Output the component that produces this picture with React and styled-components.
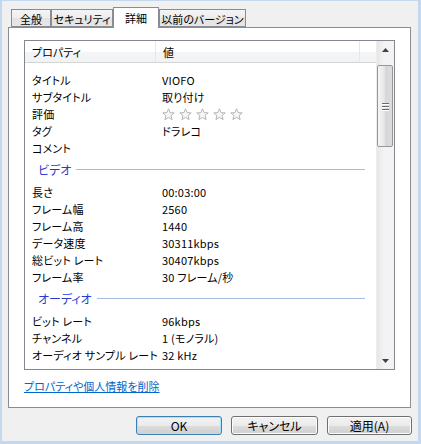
import React from 'react'
import styled, { createGlobalStyle } from 'styled-components'

const GlobalStyle = createGlobalStyle`
  html, body {
    margin: 0;
    padding: 0;
    background: #f0f0f0;
  }
  body {
    font-family: "Noto Sans CJK JP", "Noto Sans", sans-serif;
    font-size: 11px;
    color: #000;
    font-feature-settings: "palt";
  }
`

const basic = [
  ['タイトル', 'VIOFO'],
  ['サブタイトル', '取り付け'],
  ['評価', 'stars'],
  ['タグ', 'ドラレコ'],
  ['コメント', ''],
]

const video = [
  ['長さ', '00:03:00'],
  ['フレーム幅', '2560'],
  ['フレーム高', '1440'],
  ['データ速度', '30311kbps'],
  ['総ビット レート', '30407kbps'],
  ['フレーム率', '30 フレーム/秒'],
]

const audio = [
  ['ビット レート', '96kbps'],
  ['チャンネル', '1 (モノラル)'],
  ['オーディオ サンプル レート', '32 kHz'],
]

const tabs = ['全般', 'セキュリティ', '詳細', '以前のバージョン']
const tabWidths = [40, 62, 46, 87]

const Dialog = styled.div`
  width: 421px;
  height: 444px;
  box-sizing: border-box;
  background: #f0f0f0;
  border-style: solid;
  border-color: #c3d8ee;
  border-width: 1px 3px 3px 2px;
  padding-top: 6px;
`

const TabStrip = styled.div`
  display: flex;
  align-items: flex-end;
  height: 20px;
  padding-left: 9px;
`

const Tab = styled.div`
  box-sizing: border-box;
  width: ${p => p.w}px;
  height: ${p => (p.active ? 21 : 18)}px;
  margin-bottom: ${p => (p.active ? -1 : 0)}px;
  position: relative;
  z-index: ${p => (p.active ? 2 : 1)};
  border: 1px solid #898c95;
  border-bottom: ${p => (p.active ? 'none' : '1px solid #898c95')};
  background: ${p =>
    p.active
      ? '#fff'
      : 'linear-gradient(#f4f4f4, #ededed 50%, #e2e2e2 51%, #e6e6e6)'};
  display: flex;
  align-items: center;
  justify-content: center;
  padding-top: ${p => (p.active ? 0 : 1)}px;
  line-height: 14px;
  white-space: nowrap;
`

const Panel = styled.div`
  box-sizing: border-box;
  margin-left: 6px;
  width: 403px;
  height: 381px;
  background: #fff;
  border: 1px solid #898c95;
  padding: 12px 15px 0 15px;
`

const ListBox = styled.div`
  box-sizing: border-box;
  height: 330px;
  border: 1px solid #828790;
  display: flex;
  overflow: hidden;
`

const ListContent = styled.div`
  flex: 1;
  overflow: hidden;
`

const Header = styled.div`
  display: flex;
  height: 22px;
  box-sizing: border-box;
  border-bottom: 1px solid #d5d5d5;
  background: linear-gradient(#ffffff, #ffffff 50%, #f4f5f7 51%, #f1f2f4);
`

const HeaderCell = styled.div`
  box-sizing: border-box;
  width: ${p => (p.w ? `${p.w}px` : 'auto')};
  flex: ${p => (p.w ? 'none' : 1)};
  border-right: ${p => (p.w ? '1px solid #e3e8ee' : 'none')};
  padding-left: 7px;
  display: flex;
  align-items: center;
  line-height: 14px;
`

const Body = styled.div`
  padding-top: 8px;
`

const Row = styled.div`
  display: grid;
  grid-template-columns: 130px 1fr;
  height: 17px;
  align-items: center;
  padding-left: 7px;
  line-height: 14px;
  white-space: nowrap;
  letter-spacing: 0.2px;
`

const Cell = styled.span`
  overflow: hidden;
`

const GroupHeader = styled.div`
  display: flex;
  align-items: center;
  height: 27px;
  padding-left: 13px;
  padding-right: 11px;
  color: #2c3bcf;
  line-height: 14px;
  font-size: 12px;
  white-space: nowrap;
`

const GroupLine = styled.div`
  flex: 1;
  height: 1px;
  margin-left: 5px;
  background: #a8bbe2;
`

const Stars = styled.div`
  display: flex;
  gap: 4px;
  padding-top: 1px;
`

const ScrollBar = styled.div`
  width: 17px;
  display: flex;
  flex-direction: column;
  background: linear-gradient(to right, #e6e6e6, #f3f3f3 40%, #f3f3f3);
  border-left: 1px solid #ececec;
`

const ArrowBtn = styled.div`
  height: 17px;
  display: flex;
  align-items: center;
  justify-content: center;
`

const Thumb = styled.div`
  box-sizing: border-box;
  margin: 7px 1px 0 0;
  height: 82px;
  border: 1px solid #979797;
  border-radius: 2px;
  background: linear-gradient(to right, #f5f5f5, #e6e6e6 45%, #d6d6d6 55%, #dcdcdc);
  display: flex;
  flex-direction: column;
  align-items: center;
  justify-content: center;
  gap: 2px;
`

const Grip = styled.div`
  width: 7px;
  height: 1px;
  background: #6b6b6b;
  box-shadow: 0 1px 0 #fff;
`

const Spacer = styled.div`
  flex: 1;
`

const Link = styled.a`
  display: inline-block;
  margin-top: 9px;
  color: #0066cc;
  text-decoration: underline;
  line-height: 14px;
  cursor: pointer;
`

const ButtonRow = styled.div`
  display: flex;
  justify-content: flex-end;
  gap: 9px;
  margin-top: 8px;
  padding-right: 6px;
`

const Button = styled.button`
  box-sizing: border-box;
  width: ${p => p.w}px;
  height: 19px;
  padding: 0;
  font: inherit;
  font-size: 12px;
  line-height: 14px;
  color: #000;
  border: 1px solid ${p => (p.primary ? '#3c7fb1' : '#707070')};
  border-radius: 3px;
  background: linear-gradient(#f2f2f2, #ebebeb 50%, #dddddd 51%, #cfcfcf);
  box-shadow: ${p => (p.primary ? 'inset 0 0 0 1px #a6e2fb' : 'inset 0 0 0 1px #fcfcfc')};
`

const Star = () => (
  <svg width="13" height="13" viewBox="0 0 13 13">
    <path
      d="M6.5 0.8 L8.1 4.6 L12.2 4.9 L9.1 7.5 L10.1 11.6 L6.5 9.4 L2.9 11.6 L3.9 7.5 L0.8 4.9 L4.9 4.6 Z"
      fill="#f7f7f7"
      stroke="#b4b4b4"
      strokeWidth="1"
      strokeLinejoin="round"
    />
  </svg>
)

const UpArrow = () => (
  <svg width="7" height="4" viewBox="0 0 7 4">
    <path d="M3.5 0 L7 4 L0 4 Z" fill="#404040" />
  </svg>
)

const DownArrow = () => (
  <svg width="7" height="4" viewBox="0 0 7 4">
    <path d="M0 0 L7 0 L3.5 4 Z" fill="#404040" />
  </svg>
)

const renderRows = rows =>
  rows.map(([label, value]) => (
    <Row key={label}>
      <Cell>{label}</Cell>
      {value === 'stars' ? (
        <Stars>
          {[0, 1, 2, 3, 4].map(i => <Star key={i} />)}
        </Stars>
      ) : (
        <Cell>{value}</Cell>
      )}
    </Row>
  ))

const App = () => {
  return (
    <>
      <GlobalStyle />
      <Dialog>
        <TabStrip>
          {tabs.map((t, i) => (
            <Tab key={t} w={tabWidths[i]} active={i === 2}>
              {t}
            </Tab>
          ))}
        </TabStrip>
        <Panel>
          <ListBox>
            <ListContent>
              <Header>
                <HeaderCell w={131}>プロパティ</HeaderCell>
                <HeaderCell w={204}>値</HeaderCell>
                <HeaderCell />
              </Header>
              <Body>
                {renderRows(basic)}
                <GroupHeader>
                  ビデオ
                  <GroupLine />
                </GroupHeader>
                {renderRows(video)}
                <GroupHeader>
                  オーディオ
                  <GroupLine />
                </GroupHeader>
                {renderRows(audio)}
              </Body>
            </ListContent>
            <ScrollBar>
              <ArrowBtn>
                <UpArrow />
              </ArrowBtn>
              <Thumb>
                <Grip />
                <Grip />
                <Grip />
              </Thumb>
              <Spacer />
              <ArrowBtn>
                <DownArrow />
              </ArrowBtn>
            </ScrollBar>
          </ListBox>
          <Link>プロパティや個人情報を削除</Link>
        </Panel>
        <ButtonRow>
          <Button w={86} primary>OK</Button>
          <Button w={87}>キャンセル</Button>
          <Button w={85}>適用(A)</Button>
        </ButtonRow>
      </Dialog>
    </>
  )
}

export default App
